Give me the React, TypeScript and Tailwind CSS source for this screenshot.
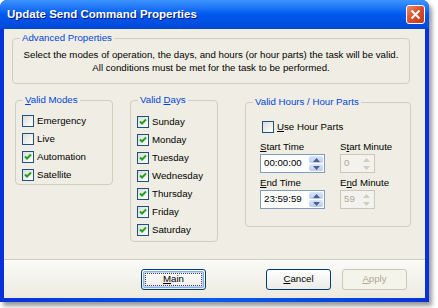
import React from "react";

const font = { fontFamily: '"Liberation Sans", Arial, sans-serif' };

function Check({ checked }: { checked?: boolean }) {
  return (
    <span className="w-[12px] h-[12px] shrink-0 border border-[#1C5180] bg-gradient-to-br from-[#DCDCD7] to-white flex items-center justify-center">
      {checked && (
        <svg width="10" height="10" viewBox="0 0 10 10">
          <path d="M2 4.5 L4 6.5 L8 2.5" fill="none" stroke="#21A121" strokeWidth="2" />
        </svg>
      )}
    </span>
  );
}

function Row({ label, checked, u }: { label: string; checked?: boolean; u?: number }) {
  return (
    <div className="h-[18px] flex items-center gap-[3px]">
      <Check checked={checked} />
      <span className="whitespace-nowrap">
        {u === undefined ? (
          label
        ) : (
          <>
            {label.slice(0, u)}
            <span className="underline">{label[u]}</span>
            {label.slice(u + 1)}
          </>
        )}
      </span>
    </div>
  );
}

function Legend({ children }: { children: React.ReactNode }) {
  return (
    <span className="absolute left-[7px] top-[-7px] px-[2px] bg-[#F0EEE4] text-[#0046D5] leading-[12px] whitespace-nowrap">
      {children}
    </span>
  );
}

function Arrow({ up, disabled }: { up?: boolean; disabled?: boolean }) {
  return (
    <span
      className={
        "flex-1 flex items-center justify-center rounded-[2px] " +
        (disabled ? "bg-[#F3F2EC]" : "bg-gradient-to-b from-[#DCE6FB] to-[#B6CBF7]")
      }
    >
      <svg width="7" height="4" viewBox="0 0 7 4">
        <path
          d={up ? "M0 4 L3.5 0 L7 4 Z" : "M0 0 L3.5 4 L7 0 Z"}
          fill={disabled ? "#CFCDC2" : "#4D6185"}
        />
      </svg>
    </span>
  );
}

function Spin({ value, w, disabled }: { value: string; w: string; disabled?: boolean }) {
  return (
    <div
      className={
        "h-[19px] flex items-stretch border p-[1px] " +
        w +
        (disabled ? " border-[#C9C7BA] bg-[#F3F2EC] text-[#ACA899]" : " border-[#7F9DB9] bg-white")
      }
    >
      <span className="flex-1 flex items-center pl-[2px]">{value}</span>
      <span className="w-[14px] flex flex-col gap-[1px]">
        <Arrow up disabled={disabled} />
        <Arrow disabled={disabled} />
      </span>
    </div>
  );
}

function Btn({ label, focus, disabled }: { label: string; focus?: boolean; disabled?: boolean }) {
  return (
    <div
      className={
        "w-[65px] h-[21px] rounded-[3px] border flex items-center justify-center p-[1px] " +
        (disabled
          ? "border-[#C9C7BA] bg-[#F5F4EA] text-[#ACA899]"
          : "border-[#003C74] bg-gradient-to-b from-white to-[#ECEBE6]")
      }
    >
      <div
        className={
          "w-full h-full rounded-[2px] flex items-center justify-center " +
          (focus ? "border border-[#89ADE4] shadow-[inset_0_0_0_1px_#C4D6F6] p-[1px]" : "")
        }
      >
        <span
          className={
            "w-full h-full flex items-center justify-center " +
            (focus ? "border border-dotted border-[#444]" : "")
          }
        >
          <span>
            <span className="underline">{label[0]}</span>
            {label.slice(1)}
          </span>
        </span>
      </div>
    </div>
  );
}

export default function App() {
  return (
    <div className="w-[438px] h-[308px] bg-white text-[9.7px] text-black" style={font}>
      <div className="w-[429px] h-[302px] flex flex-col rounded-t-[7px] bg-gradient-to-r from-[#0831D9] via-[#0A5BEB] to-[#0831D9] shadow-[3px_4px_4px_rgba(0,0,0,0.4)]">
        {/* title bar */}
        <div className="h-[29px] shrink-0 rounded-t-[7px] bg-gradient-to-b from-[#3D95FF] via-[#0058EE] to-[#0048D8] flex items-center justify-between pl-[7px] pr-[4px]">
          <span className="text-white font-bold text-[11.5px] [text-shadow:1px_1px_0_#0A1883]">
            Update Send Command Properties
          </span>
          <span className="w-[19px] h-[19px] rounded-[3px] border border-white bg-gradient-to-br from-[#E8886A] via-[#DA4E2A] to-[#C13A16] flex items-center justify-center">
            <svg width="11" height="11" viewBox="0 0 11 11">
              <path d="M1.5 1.5 L9.5 9.5 M9.5 1.5 L1.5 9.5" stroke="white" strokeWidth="2" />
            </svg>
          </span>
        </div>

        {/* client */}
        <div className="mx-[4px] w-[421px] h-[269px] flex flex-col bg-[#F0EEE4]">
          <div className="h-[230px] shrink-0 pt-[9px]">
            <div className="relative ml-[8px] w-[398px] h-[46px] border border-[#D0CEBF] rounded-[4px] pt-[9px] text-center leading-[13px]">
              <Legend>Advanced Properties</Legend>
              <div>Select the modes of operation, the days, and hours (or hour parts) the task will be valid.</div>
              <div>All conditions must be met for the task to be performed.</div>
            </div>

            <div className="flex items-start mt-[16px] ml-[11px]">
              <div className="relative w-[98px] h-[85px] border border-[#D0CEBF] rounded-[4px] pt-[11px] pl-[6px]">
                <Legend>
                  <span className="underline">V</span>alid Modes
                </Legend>
                <Row label="Emergency" />
                <Row label="Live" />
                <Row label="Automation" checked />
                <Row label="Satellite" checked />
              </div>

              <div className="relative ml-[17px] w-[88px] h-[142px] border border-[#D0CEBF] rounded-[4px] pt-[12px] pl-[6px]">
                <Legend>
                  Valid <span className="underline">D</span>ays
                </Legend>
                {["Sunday", "Monday", "Tuesday", "Wednesday", "Thursday", "Friday", "Saturday"].map((d) => (
                  <Row key={d} label={d} checked />
                ))}
              </div>

              <div className="relative ml-[27px] mt-[2px] w-[166px] h-[125px] border border-[#D0CEBF] rounded-[4px] pt-[17px] pl-[14px]">
                <Legend>Valid Hours / Hour Parts</Legend>
                <div className="ml-[2px] h-[14px] flex items-center">
                  <Row label="Use Hour Parts" u={0} />
                </div>
                <div className="flex gap-[15px] mt-[7px]">
                  <div className="w-[65px] flex flex-col">
                    <span className="leading-[12px] whitespace-nowrap">
                      <span className="underline">S</span>tart Time
                    </span>
                    <div className="mt-[1px]">
                      <Spin value="00:00:00" w="w-[65px]" />
                    </div>
                    <span className="leading-[12px] mt-[4px] whitespace-nowrap">
                      <span className="underline">E</span>nd Time
                    </span>
                    <div className="mt-[1px]">
                      <Spin value="23:59:59" w="w-[65px]" />
                    </div>
                  </div>
                  <div className="w-[62px] flex flex-col">
                    <span className="leading-[12px] whitespace-nowrap">
                      S<span className="underline">t</span>art Minute
                    </span>
                    <div className="mt-[1px]">
                      <Spin value="0" w="w-[35px]" disabled />
                    </div>
                    <span className="leading-[12px] mt-[4px] whitespace-nowrap">
                      E<span className="underline">n</span>d Minute
                    </span>
                    <div className="mt-[1px]">
                      <Spin value="59" w="w-[35px]" disabled />
                    </div>
                  </div>
                </div>
              </div>
            </div>
          </div>

          {/* footer */}
          <div className="flex-1 border-t border-[#D0CEBF] bg-gradient-to-b from-[#FBFBF8] to-[#ECEAE0] shadow-[inset_0_1px_0_white] flex items-start pt-[9px] pl-[137px]">
            <Btn label="Main" focus />
            <div className="ml-[60px]">
              <Btn label="Cancel" />
            </div>
            <div className="ml-[11px]">
              <Btn label="Apply" disabled />
            </div>
          </div>
        </div>
      </div>
    </div>
  );
}
